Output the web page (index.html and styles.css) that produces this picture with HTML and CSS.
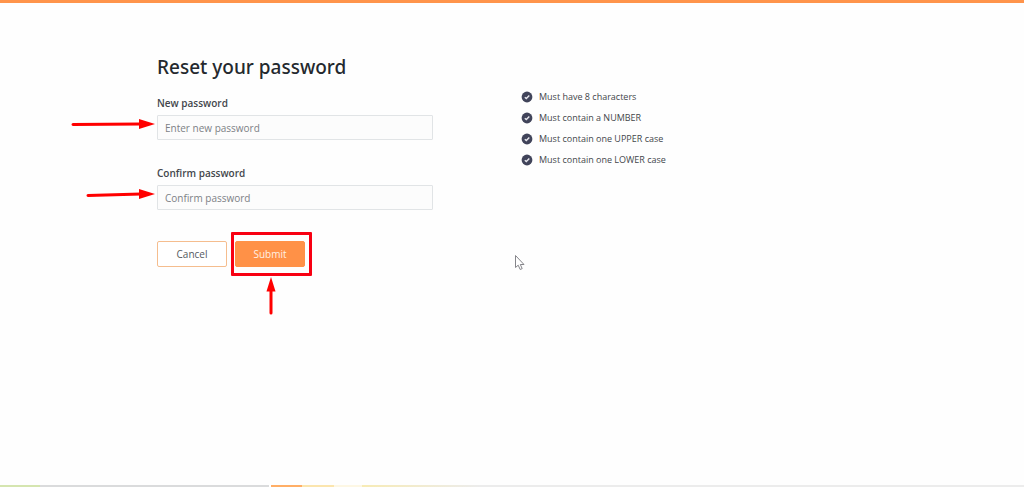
FILE: index.html
```html
<!DOCTYPE html>
<html lang="en">
<head>
  <meta charset="UTF-8">
  <meta name="viewport" content="width=device-width, initial-scale=1.0">
  <title>Reset your password</title>
  <link rel="stylesheet" href="styles.css">
</head>
<body>

  <main class="container">
    <form class="reset-form">
      <h1>Reset your password</h1>

      <div class="field">
        <label for="newPassword">New password</label>
        <input type="password" id="newPassword" placeholder="Enter new password">
        <svg class="arrow arrow-right" width="86" height="12" viewBox="0 0 86 12">
          <path d="M2 6.5L70 6" stroke="#f00" stroke-width="3" stroke-linecap="round"/>
          <path d="M68 1L84 6L68 11Z" fill="#f00"/>
        </svg>
      </div>

      <div class="field">
        <label for="confirmPassword">Confirm password</label>
        <input type="password" id="confirmPassword" placeholder="Confirm password">
        <svg class="arrow arrow-right" width="86" height="12" viewBox="0 0 86 12">
          <path d="M17 7.5L70 6" stroke="#f00" stroke-width="3" stroke-linecap="round"/>
          <path d="M68 1L84 6L68 11Z" fill="#f00"/>
        </svg>
      </div>

      <div class="buttons">
        <button type="button" class="btn btn-cancel">Cancel</button>
        <div class="submit-wrap">
          <button type="submit" class="btn btn-submit">Submit</button>
          <div class="highlight"></div>
          <svg class="arrow arrow-up" width="12" height="40" viewBox="0 0 12 40">
            <path d="M6 14V37" stroke="#f00" stroke-width="3" stroke-linecap="round"/>
            <path d="M6 1L10.500 15.500H1.500Z" fill="#f00"/>
          </svg>
        </div>
      </div>
    </form>

    <ul class="rules">
      <li>
        <svg class="check" viewBox="0 0 12 12"><circle cx="6" cy="6" r="5.400" fill="#41445a"/><path d="M3.800 6.300L5.300 7.600L8.300 4.500" fill="none" stroke="#e8e8ee" stroke-width="1.400"/></svg>
        Must have 8 characters
      </li>
      <li>
        <svg class="check" viewBox="0 0 12 12"><circle cx="6" cy="6" r="5.400" fill="#41445a"/><path d="M3.800 6.300L5.300 7.600L8.300 4.500" fill="none" stroke="#e8e8ee" stroke-width="1.400"/></svg>
        Must contain a NUMBER
      </li>
      <li>
        <svg class="check" viewBox="0 0 12 12"><circle cx="6" cy="6" r="5.400" fill="#41445a"/><path d="M3.800 6.300L5.300 7.600L8.300 4.500" fill="none" stroke="#e8e8ee" stroke-width="1.400"/></svg>
        Must contain one UPPER case
      </li>
      <li>
        <svg class="check" viewBox="0 0 12 12"><circle cx="6" cy="6" r="5.400" fill="#41445a"/><path d="M3.800 6.300L5.300 7.600L8.300 4.500" fill="none" stroke="#e8e8ee" stroke-width="1.400"/></svg>
        Must contain one LOWER case
      </li>
    </ul>
  </main>

  <!-- Mouse pointer -->
  <svg class="cursor" width="12" height="18" viewBox="0 0 12 18">
    <path d="M1.500 1.500V13.500L4.200 11.200L6.200 15.500L8.200 14.600L6.300 10.500H10Z" fill="#fff" stroke="#85858a" stroke-width="1"/>
  </svg>

  <footer class="strip"></footer>

</body>
</html>
```

FILE: styles.css
```css
* {
  box-sizing: border-box;
}

body {
  display: flex;
  flex-direction: column;
  min-height: 100vh;
  margin: 0;
  border-top: 3px solid #ff944b;
  background-color: #fefefe;
  color: #43464b;
  font-family: "Segoe UI", "Open Sans", sans-serif;
  font-size: 10px;
  position: relative;
}

.container {
  flex: 1;
  display: grid;
  grid-template-columns: minmax(0, 276px) minmax(0, 1fr);
  column-gap: 88px;
  padding: 50px 24px 24px 157px;
}

h1 {
  margin: 0 0 15px;
  color: #24292e;
  font-family: "Segoe UI", "Noto Sans", sans-serif;
  font-size: 19px;
  font-weight: 500;
  line-height: 28px;
}

.field {
  position: relative;
  margin-bottom: 26px;
}

label {
  display: block;
  margin-bottom: 5px;
  font-weight: 600;
  line-height: 14px;
}

input {
  display: block;
  width: 100%;
  height: 25px;
  padding: 0 7px;
  border: 1px solid #e1e4e6;
  border-radius: 1px;
  background-color: #fcfcfc;
  color: #33363b;
  font: inherit;
}

input::placeholder {
  color: #7d8186;
}

/* Buttons */
.buttons {
  display: flex;
  gap: 8px;
  padding-top: 5px;
}

.btn {
  display: block;
  width: 70px;
  height: 26px;
  padding: 0;
  border: 1px solid #f5bd8e;
  border-radius: 2px;
  background-color: #fff;
  color: #55595e;
  font: inherit;
}

.btn-submit {
  border-color: #ff9147;
  background-color: #ff9147;
  color: #fff0e4;
}

.submit-wrap {
  position: relative;
}

/* Red marks drawn over the form */
.highlight {
  position: absolute;
  top: -9px;
  right: -7px;
  bottom: -9px;
  left: -4px;
  border: 3px solid #f80012;
  border-radius: 1px;
  pointer-events: none;
}

.arrow {
  position: absolute;
  pointer-events: none;
}

.arrow-right {
  top: 22px;
  right: 100%;
}

.arrow-up {
  top: 35px;
  left: 30px;
}

/* Password rules */
.rules {
  margin: 0;
  padding: 33px 0 0;
  font-size: 9px;
  list-style: none;
}

.rules li {
  display: flex;
  align-items: center;
  gap: 6px;
  line-height: 21px;
}

.check {
  width: 12px;
  height: 12px;
}

.cursor {
  position: absolute;
  top: 251px;
  left: 514px;
}

.strip {
  height: 2px;
  background: linear-gradient(to right, #d5e5b0 0 40px, #dadbdc 40px 269px, #fff 269px 271px, #ffae66 271px 302px, #fbe5ae 302px 334px, #fdf7e4 334px 362px, #f7ebb5 362px, #ececec 480px);
}
```
